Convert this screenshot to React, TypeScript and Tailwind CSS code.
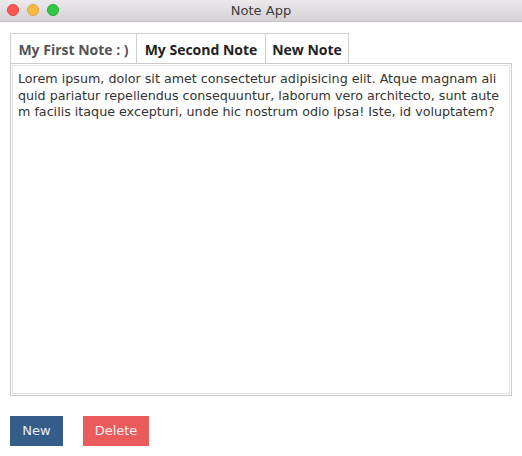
import React, { useState } from "react";

const tabs = [
  { label: "My First Note : )", width: "w-[127px]" },
  { label: "My Second Note", width: "w-[130px]" },
  { label: "New Note", width: "w-[84px]" },
];

const noteLines = [
  "Lorem ipsum, dolor sit amet consectetur adipisicing elit. Atque magnam ali",
  "quid pariatur repellendus consequuntur, laborum vero architecto, sunt aute",
  "m facilis itaque excepturi, unde hic nostrum odio ipsa! Iste, id voluptatem?",
];

const TitleBar = () => {
  return (
    <div className="relative flex h-[22px] items-center justify-center border-b border-[#c6c2c6] bg-gradient-to-b from-[#ebe9eb] to-[#d5d2d5]">
      <div className="absolute left-[7px] top-[4px] flex gap-[8px]">
        <span className="h-[12px] w-[12px] rounded-full bg-[#fc5753] border border-[#df4744]" />
        <span className="h-[12px] w-[12px] rounded-full bg-[#fdbc40] border border-[#de9f34]" />
        <span className="h-[12px] w-[12px] rounded-full bg-[#33c748] border border-[#27aa35]" />
      </div>
      <span className="text-[13px] text-[#3c3c3c]">Note App</span>
    </div>
  );
};

export default function App() {
  const [active, setActive] = useState(0);

  return (
    <div className="h-[456px] w-[522px] overflow-hidden bg-white font-['DejaVu_Sans',sans-serif]">
      <TitleBar />
      <div className="px-[10px] pt-[11px]">
        <div className="flex h-[30px]">
          {tabs.map((tab, i) => (
            <button
              key={tab.label}
              onClick={() => setActive(i)}
              className={
                "-ml-px first:ml-0 flex items-center justify-center border border-b-0 border-[#cfcfcf] pt-[2px] font-['Open_Sans',sans-serif] text-[14px] font-bold whitespace-nowrap " +
                tab.width +
                (i === active ? " text-[#555555]" : " text-[#222222]")
              }
            >
              {tab.label}
            </button>
          ))}
        </div>
        <div className="h-[333px] border border-[#cdcdcd] p-[1px]">
          <div className="h-full border border-[#e2e2e2] px-[5px] pt-[5px] text-[12.7px] leading-[16.5px] text-[#333333]">
            {noteLines.map((line) => (
              <div key={line} className="whitespace-nowrap">
                {line}
              </div>
            ))}
          </div>
        </div>
        <div className="mt-[20px] flex gap-[20px]">
          <button className="h-[30px] w-[53px] bg-[#365d89] text-[13px] text-[#e8eef5]">New</button>
          <button className="h-[30px] w-[66px] bg-[#ea5c5c] text-[13px] text-[#fdeeee]">Delete</button>
        </div>
      </div>
    </div>
  );
}
